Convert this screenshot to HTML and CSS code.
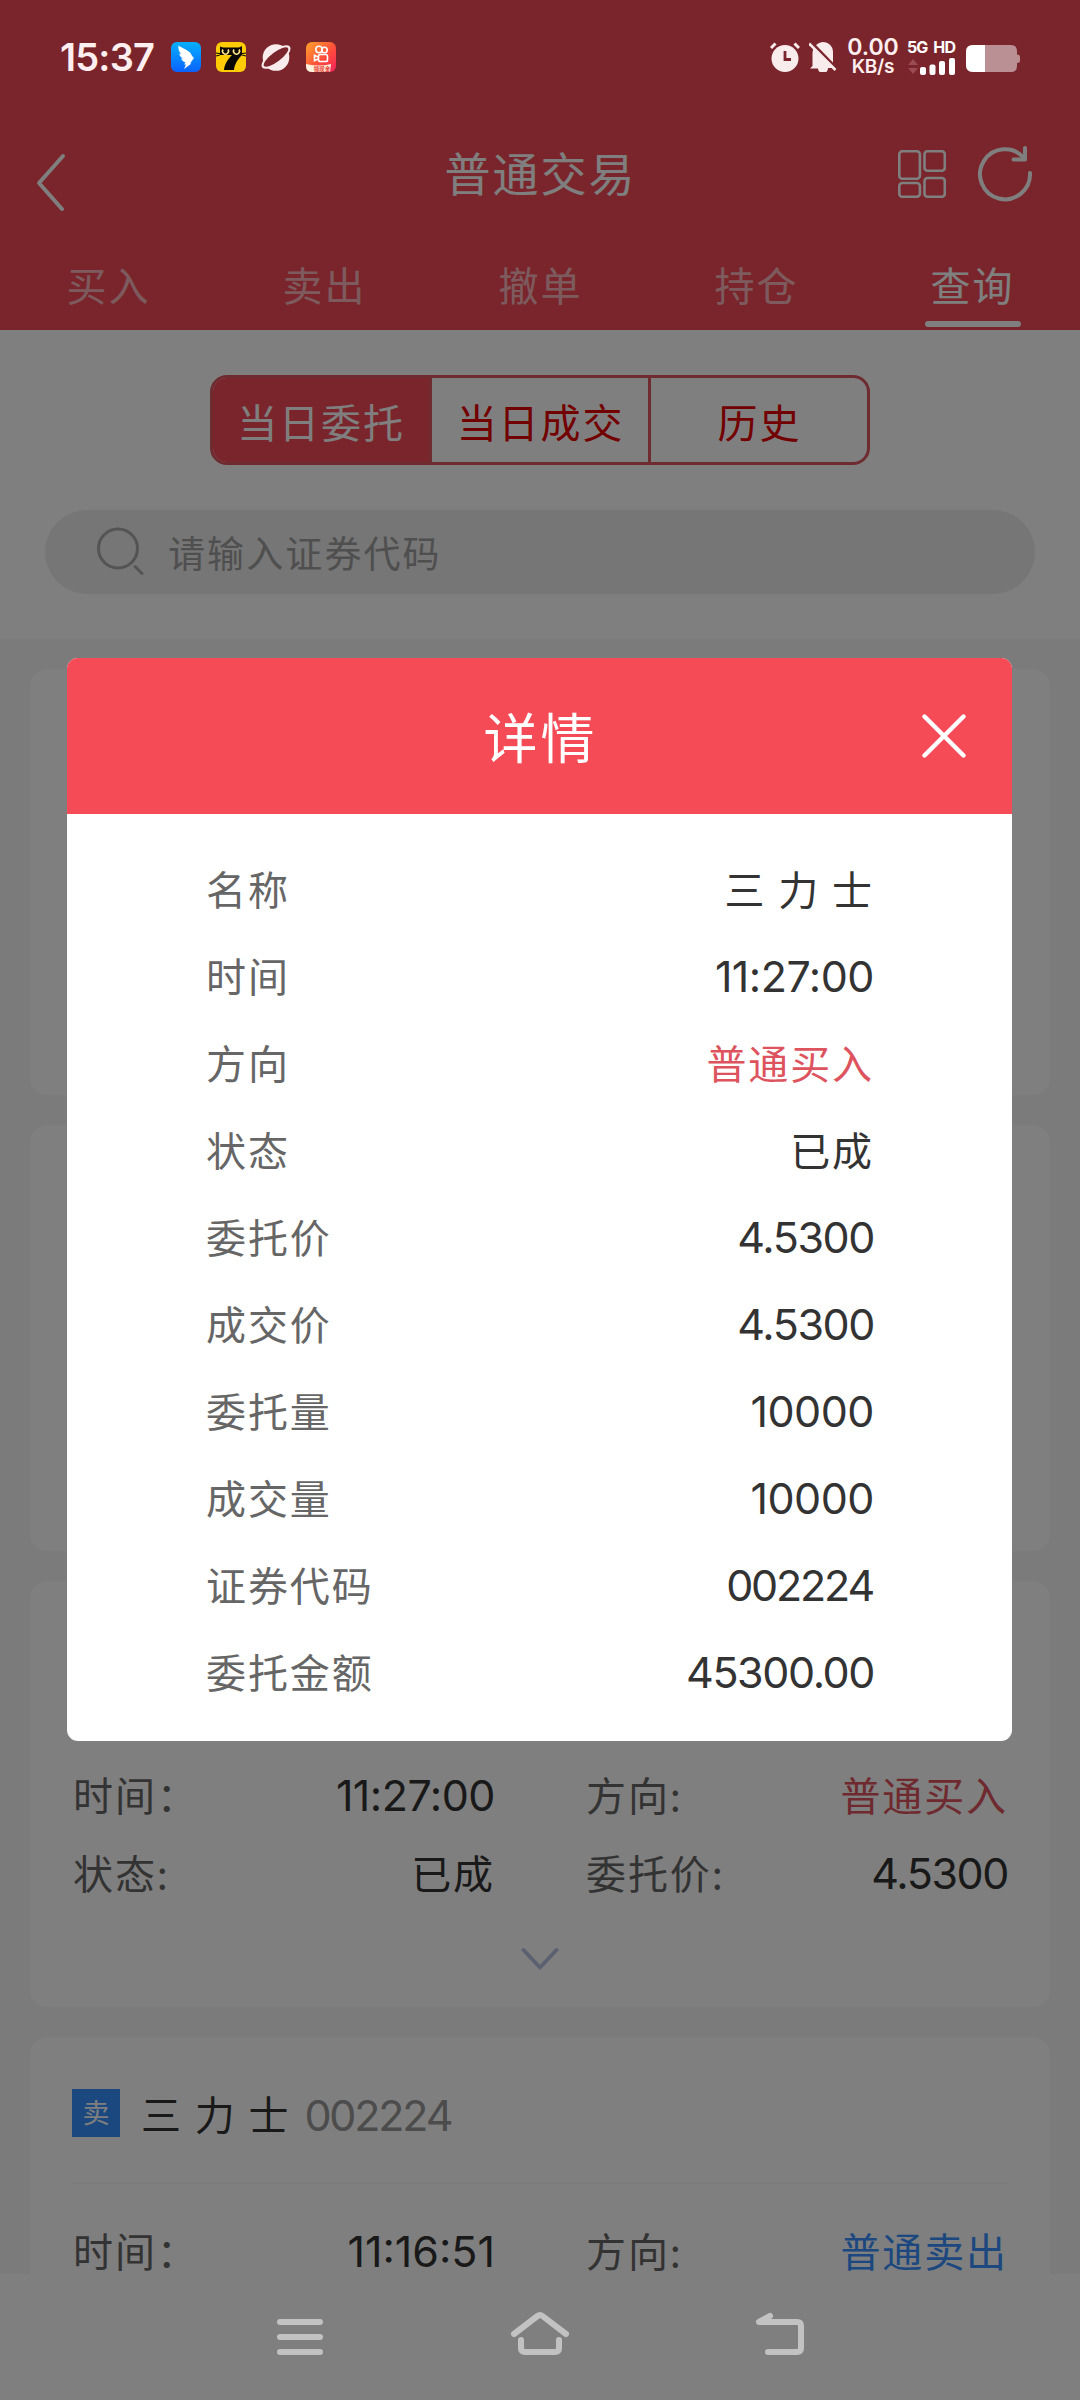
FILE: index.html
```html
<!DOCTYPE html>
<html lang="zh-CN">
<head>
<meta charset="utf-8">
<title>普通交易</title>
<link rel="stylesheet" href="styles.css">
</head>
<body>
<div class="screen">
  <header class="header">
    <div class="status">
      <div class="status-left">
        <span class="clock">15:37</span>
        <svg class="app" viewBox="0 0 30 30"><defs><linearGradient id="wing" x1="0" y1="0" x2="0" y2="1"><stop offset="0" stop-color="#06b0ff"/><stop offset="1" stop-color="#0a62ff"/></linearGradient></defs><rect width="30" height="30" rx="6" fill="url(#wing)"/><path d="M7.500 3.500C11 6 17 8 19.500 11c1 1.500 1 2.500 3.500 5l-4 5.500h1.500L13 27l2-4.500h-2l1.500-2C12 19.500 10.500 18 10 16.500l2 .3C9.500 15 8.500 13.500 8.300 11.500l2 .7C8 9.500 7 7 7.500 3.500Z" fill="#fff"/></svg>
        <svg class="app" viewBox="0 0 30 30"><rect width="30" height="30" rx="6" fill="#ffcb05"/><path d="M4 13V4.500L7 5.500h16l3-1.500v9C22 17 18.500 22 18 28H8c.5-6 4-11 8-15Z" fill="#0b0803"/><path d="M7 7.500a3 3 0 1 0 5 0M18 7.500a3 3 0 1 0 5 0" fill="none" stroke="#ffe28a" stroke-width="1.600"/><path d="M0 11l4 .6M0 14l4-1M30 11l-4 .6M30 14l-4-1" stroke="#0b0803" stroke-width="1"/></svg>
        <svg class="app" viewBox="0 0 30 30"><circle cx="15" cy="15.500" r="13.300" fill="#f9eced"/><ellipse cx="15" cy="15" rx="17.300" ry="7" transform="rotate(-37 15 15)" fill="#f9eced"/><ellipse cx="15" cy="15" rx="15" ry="4.800" transform="rotate(-37 15 15)" fill="#7a262c"/></svg>
        <svg class="app" viewBox="0 0 30 30"><defs><linearGradient id="cam" x1="0" y1="0" x2="1" y2="1"><stop offset="0" stop-color="#ffa52c"/><stop offset=".55" stop-color="#ff4e3b"/><stop offset="1" stop-color="#f2215c"/></linearGradient></defs><rect width="30" height="30" rx="6" fill="url(#cam)"/><g fill="none" stroke="#fff" stroke-width="1.600"><circle cx="13" cy="7.500" r="3.200"/><circle cx="18.500" cy="8" r="2.700"/><rect x="12.500" y="12.500" width="9" height="7" rx="1.800"/><path d="M12 15l-3.500-1.700v5.500L12 17"/></g><path d="M0 22q14 3 25 0l-1 8H6q-6 0-6-6Z" fill="#fff2dc"/><text x="7.500" y="29" font-size="5.600" font-weight="700" class="mini">领现金</text></svg>
      </div>
      <div class="status-right">
        <svg class="alarm" viewBox="0 0 30 30"><circle cx="15" cy="16.500" r="13.500" fill="#f9eced"/><path d="M1 6l4.500-4.500M29 6l-4.500-4.500" stroke="#f9eced" stroke-width="3"/><path d="M15 9v8.500h6" fill="none" stroke="#7a262c" stroke-width="2.800"/></svg>
        <svg class="bell" viewBox="0 0 28 30"><path d="M3.500 24V11C4 4.500 8 1 13.500 0 20 0 24 4.500 24 10v14l2 2h-7a5 5 0 0 1-10 .5L1 26.500Z" fill="#f9eced"/><path d="M1.500-.5l26 27" stroke="#7a262c" stroke-width="3"/><path d="M0 1.500l26.500 26.500" stroke="#f9eced" stroke-width="2.600"/></svg>
        <div class="speed"><span class="rate">0.00</span><span class="unit">KB/s</span></div>
        <div class="cell">
          <span class="net">5G HD</span>
          <svg viewBox="0 0 49 17"><path d="M1 7l5-6 5 6ZM1 10l5 6 5-6Z" fill="#9b4b52"/><g fill="#fff"><rect x="13" y="9" width="6" height="8" rx="2"/><rect x="22.500" y="6.500" width="6" height="10.500" rx="2"/><rect x="32" y="3" width="6" height="14" rx="2"/><rect x="42" y="0" width="6" height="17" rx="2"/></g></svg>
        </div>
        <svg class="battery" viewBox="0 0 54 27"><path d="M7 0h38q6 0 6 6v3.500q3 0 3 2.500v3.500q0 2.500-3 2.500v3q0 6-6 6H7q-7 0-7-7V7Q0 0 7 0Z" fill="#bb9094"/><path d="M19 0H7Q0 0 0 7v13q0 7 7 7h12Z" fill="#fff"/></svg>
      </div>
    </div>
    <div class="titlebar">
      <svg class="back" viewBox="0 0 32 60"><path d="M28 4L4 31l23 26" fill="none" stroke="#fff" stroke-width="4" stroke-linecap="round" stroke-linejoin="round"/></svg>
      <h1>普通交易</h1>
      <div class="actions">
        <svg class="grid" viewBox="0 0 48 48" fill="none" stroke="#fff" stroke-width="2.600"><rect x="1.300" y="1.200" width="20.600" height="27.600" rx="3"/><rect x="26.500" y="1.200" width="20.300" height="19.500" rx="3"/><rect x="1.300" y="33" width="20.600" height="13.800" rx="3"/><rect x="26.500" y="28" width="20.300" height="18.800" rx="3"/></svg>
        <svg class="reload" viewBox="0 0 56 56" fill="none" stroke="#fff" stroke-width="4" stroke-linecap="round" stroke-linejoin="round"><path d="M52 27A25 25 0 1 1 46 12"/><path d="M47 2v11.500H35.500"/></svg>
      </div>
    </div>
    <nav class="tabs">
      <span>买入</span><span>卖出</span><span>撤单</span><span>持仓</span><span class="on">查询</span>
    </nav>
  </header>

  <section class="filters">
    <div class="segment"><span class="on">当日委托</span><span>当日成交</span><span>历史</span></div>
    <div class="search">
      <svg viewBox="0 0 48 50" fill="none" stroke="#a8a8a8" stroke-width="3" stroke-linecap="round"><circle cx="21" cy="21.500" r="19.500"/><path d="M38 39.500l7 7"/></svg>
      <span>请输入证券代码</span>
    </div>
  </section>

  <main class="list">
    <article class="card"></article>
    <article class="card"></article>
    <article class="card">
      <div class="card-head"></div>
      <div class="fields">
        <div class="field"><span>时间：</span><b class="num time">11:27:00</b></div>
        <div class="field"><span>方向:</span><b class="buy">普通买入</b></div>
        <div class="field"><span>状态:</span><b>已成</b></div>
        <div class="field"><span>委托价:</span><b class="num">4.5300</b></div>
      </div>
      <svg class="more" viewBox="0 0 38 24"><path d="M2.500 3L19 20.500 35.500 3" fill="none" stroke="#b6c3e0" stroke-width="4" stroke-linecap="round" stroke-linejoin="round"/></svg>
    </article>
    <article class="card">
      <div class="card-head lined"><i class="badge">卖</i><span class="name">三 力 士</span><span class="num code">002224</span></div>
      <div class="fields">
        <div class="field"><span>时间：</span><b class="num early">11:16:51</b></div>
        <div class="field"><span>方向:</span><b class="sell">普通卖出</b></div>
      </div>
    </article>
  </main>

  <footer class="sysnav">
    <svg viewBox="0 0 60 60"><path d="M10 15h40M10 30h40M10 45h40"/></svg>
    <svg viewBox="0 0 60 60"><path d="M4 27L27.500 9q2.500-2 5 0L56 27M11 33v8q0 4 4 4h30q4 0 4-4v-8"/></svg>
    <svg viewBox="0 0 60 60"><path d="M20 9L9 15h38q4 0 4 4v22q0 4-4 4H18"/></svg>
  </footer>

  <div class="mask">
    <div class="modal">
      <div class="modal-head">
        <h2>详情</h2>
        <svg class="close" viewBox="0 0 44 44"><path d="M2.500 2.500l39 39M41.500 2.500l-39 39" stroke="#fff" stroke-width="4.400" stroke-linecap="round"/></svg>
      </div>
      <dl class="rows">
        <div><dt>名称</dt><dd>三 力 士</dd></div>
        <div><dt>时间</dt><dd class="num time">11:27:00</dd></div>
        <div><dt>方向</dt><dd class="buy">普通买入</dd></div>
        <div><dt>状态</dt><dd>已成</dd></div>
        <div><dt>委托价</dt><dd class="num">4.5300</dd></div>
        <div><dt>成交价</dt><dd class="num">4.5300</dd></div>
        <div><dt>委托量</dt><dd class="num time">10000</dd></div>
        <div><dt>成交量</dt><dd class="num time">10000</dd></div>
        <div><dt>证券代码</dt><dd class="num code-value">002224</dd></div>
        <div><dt>委托金额</dt><dd class="num">45300.00</dd></div>
      </dl>
    </div>
  </div>
</div>
</body>
</html>
```
FILE: styles.css
```css
* { box-sizing: border-box; margin: 0; padding: 0; }
body {
  width: 1080px;
  font-family: "Noto Sans CJK SC", sans-serif;
  font-size: 40px;
  letter-spacing: 1.900px;
  color: #333;
  background: #fff;
}
svg { display: block; flex: none; }
b, i, h1, h2 { font-weight: 400; font-style: normal; }
.num { font-family: Inter, "Noto Sans CJK SC", sans-serif; font-size: 43px; letter-spacing: -1.400px; }
.time { letter-spacing: -.5px; }
.early { letter-spacing: 0; }
.buy { color: #dd545e; }
.sell { color: #3890ff; }

.screen {
  position: relative;
  display: flex;
  flex-direction: column;
  height: 2400px;
  overflow: hidden;
}

/* header */
.header { height: 330px; background: #f44b57; color: #fff; }
.status {
  position: relative;
  z-index: 2;
  display: flex;
  justify-content: space-between;
  height: 114px;
  padding: 0 60px;
  align-items: center;
  font-family: Inter, sans-serif;
}
.status-left, .status-right { display: flex; align-items: center; }
.status-left { gap: 15px; }
.clock { width: 96px; font-size: 38px; font-weight: 600; line-height: 40px; letter-spacing: -.8px; color: #ffeff0; white-space: nowrap; }
.app { width: 30px; height: 30px; }
.mini { fill: #e5372e; font-family: "Noto Sans CJK SC", sans-serif; letter-spacing: 0; }
.alarm { width: 30px; height: 30px; margin-right: 9px; }
.bell { width: 28px; height: 30px; margin-right: 10px; }
.speed { display: flex; flex-direction: column; align-items: center; width: 52px; margin-right: 8px; color: #ffeff0; }
.rate { font-size: 23px; font-weight: 600; line-height: 20px; letter-spacing: 0; }
.unit { font-size: 19px; font-weight: 600; line-height: 20px; letter-spacing: -.2px; }
.cell { display: flex; flex-direction: column; gap: 3px; width: 49px; margin-right: 10px; }
.net { font-size: 16px; font-weight: 700; line-height: 15px; letter-spacing: -.9px; word-spacing: 3px; white-space: nowrap; }
.cell svg { width: 49px; height: 17px; }
.battery { width: 54px; height: 27px; margin-top: 3px; }

.titlebar {
  display: grid;
  grid-template-columns: 1fr auto 1fr;
  align-items: center;
  height: 120px;
  padding: 0 46px 0 35px;
}
.back { width: 32px; height: 60px; margin-top: 16px; }
.titlebar h1 { font-size: 46px; letter-spacing: 2px; line-height: 60px; padding: 0 0 7px 12px; }
.actions { display: flex; justify-content: flex-end; align-items: center; gap: 32px; }
.grid { width: 48px; height: 48px; }
.reload { width: 56px; height: 56px; }

.tabs { display: grid; grid-template-columns: repeat(5, 1fr); height: 96px; }
.tabs span {
  display: flex;
  flex-direction: column;
  align-items: center;
  padding: 20px 0 0 1px;
  line-height: 60px;
  color: rgba(255, 255, 255, .62);
}
.tabs .on { color: #fff; }
.tabs .on::after { content: ""; width: 96px; height: 6px; margin-top: 7px; border-radius: 3px; background: #fff; }

/* filters */
.filters { display: flex; flex-direction: column; align-items: center; gap: 45px; height: 309px; padding-top: 45px; }
.segment {
  display: grid;
  grid-template-columns: 216px 219px 1fr;
  width: 660px;
  height: 90px;
  border: 3px solid #dd5860;
  border-radius: 17px;
  overflow: hidden;
  color: #e60000;
  line-height: 86px;
  text-align: center;
}
.segment span + span { border-left: 3px solid #dd5860; padding-left: 1px; }
.segment .on { background: #f44b57; color: #fff; }
.search {
  display: flex;
  align-items: center;
  gap: 23px;
  width: 990px;
  height: 84px;
  padding-left: 52px;
  border-radius: 42px;
  background: #ececec;
  color: #9f9f9f;
  font-size: 37px;
  letter-spacing: 2.100px;
}
.search svg { width: 48px; height: 50px; }

/* order cards */
.list {
  display: flex;
  flex-direction: column;
  flex: none;
  gap: 30px;
  height: 1635px;
  padding: 30px 30px 0;
  background: #f7f7f7;
}
.card { flex: none; height: 426px; padding: 0 42px; border-radius: 18px; background: #fff; }
.card-head { display: flex; align-items: center; height: 147px; }
.lined { border-bottom: 2px solid #f7f7f7; }
.badge {
  width: 48px;
  height: 48px;
  margin: 6px 20px 0 0;
  background: #3490ff;
  color: #fff;
  font-size: 27px;
  line-height: 46px;
  letter-spacing: 0;
  text-align: center;
}
.name { margin-right: 14px; padding: 6px 0 0 1px; word-spacing: 1px; }
.code { color: #999; padding-top: 10px; }
.code, .code-value { letter-spacing: -2.200px; }
.code-value { padding-right: 1px; }
.fields { display: grid; grid-template-columns: 422px 422px; column-gap: 91px; padding: 27px 0 1px 1px; }
.field { display: flex; justify-content: space-between; align-items: baseline; height: 78px; line-height: 78px; color: #666; }
.field b { color: #333; }
.field .buy { color: #dd545e; }
.field .sell { color: #3890ff; }
.more { width: 38px; height: 24px; margin: 35px auto 0; }

/* system navigation */
.sysnav { position: relative; z-index: 2; display: flex; justify-content: center; gap: 180px; height: 126px; padding-top: 33px; }
.sysnav svg { width: 60px; height: 60px; fill: none; stroke: #c2c2c2; stroke-width: 6; stroke-linecap: round; stroke-linejoin: round; }

/* detail dialog */
.mask {
  position: absolute;
  inset: 0;
  z-index: 1;
  display: flex;
  align-items: center;
  justify-content: center;
  padding: 0 1px 1px 0;
  background: rgba(0, 0, 0, .5);
}
.modal { width: 945px; height: 1083px; border-radius: 11px; overflow: hidden; background: #fff; }
.modal-head {
  display: grid;
  grid-template-columns: 1fr auto 1fr;
  align-items: center;
  height: 156px;
  padding: 0 46px 0 45px;
  background: #f44b57;
  color: #fff;
}
.modal-head h2 { grid-column: 2; font-size: 54px; letter-spacing: 3px; line-height: 80px; padding: 0 0 1px 3px; }
.close { width: 44px; height: 44px; margin-bottom: 1px; justify-self: end; }
.rows { padding: 31px 138px 0 139px; }
.rows div { display: flex; justify-content: space-between; align-items: baseline; height: 87px; line-height: 87px; }
.rows dt { color: #666; }
.rows dd { word-spacing: 1px; }
```
